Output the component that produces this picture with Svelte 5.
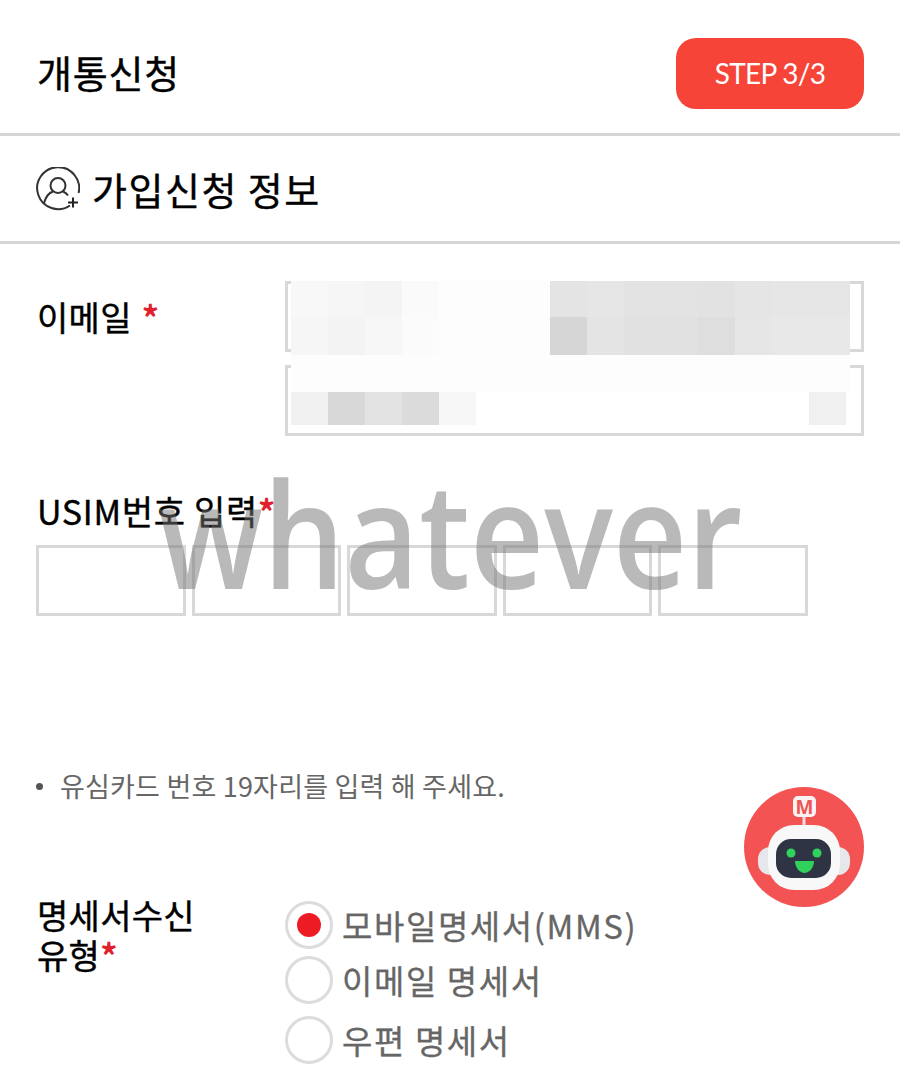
<script>
  const rows = [
    { h: 36, tiles: [['f8',1],['f6',1],['f4',1],['fa',1],['fd',3],['e4',1],['e6',1],['e3',2],['e2',1],['e5',1],['e6',2.11]] },
    { h: 38, tiles: [['f6',1],['f3',1],['f7',1],['fb',1],['fd',3],['d6',1],['e4',1],['e1',2],['de',1],['e6',1],['e8',2.11]] },
    { h: 37, tiles: [['fd',15.11]] },
    { h: 33, tiles: [['f0',1],['d8',1],['e3',1],['db',1],['f7',1],['ff',9],['f0',1]] }
  ];
  const otp = [0, 1, 2, 3, 4];
  const radios = [
    { label: '모바일명세서(MMS)', on: true },
    { label: '이메일 명세서', on: false },
    { label: '우편 명세서', on: false }
  ];
</script>

<div class="page">
  <header class="top">
    <h1>개통신청</h1>
    <span class="step">STEP 3/3</span>
  </header>

  <section class="sub">
    <svg class="uicon" viewBox="0 0 44 44" width="44" height="44" fill="none" stroke="#333" stroke-width="2">
      <path d="M34 38.500A21 21 0 1 1 42.600 26" />
      <circle cx="22" cy="18.500" r="7.500" />
      <path d="M8 36c2-7 6-10.500 9-11.500M27 24.500c2 .7 3.500 1.700 5 4" />
      <path d="M32 35.500h10M37 30.500v10" stroke="#222" />
    </svg>
    <h2>가입신청 정보</h2>
  </section>

  <div class="form">
    <div class="row email">
      <div class="label">이메일 <i class="sp">*</i></div>
      <div class="fields">
        <div class="box"></div>
        <div class="box"></div>
        <div class="mosaic" aria-hidden="true">
          {#each rows as r}
            <div class="mrow" style="height:{r.h}px">
              {#each r.tiles as [c, n]}
                <span style="width:{n * 37}px;background:#{c}{c}{c}"></span>
              {/each}
            </div>
          {/each}
        </div>
      </div>
    </div>

    <div class="usim">
      <div class="label">USIM번호 입력<i>*</i></div>
      <div class="otp">
        {#each otp as o}<div class="cell"></div>{/each}
      </div>
    </div>

    <p class="note"><span class="dot"></span>유심카드 번호 19자리를 입력 해 주세요.</p>

    <div class="row bill">
      <div class="label">명세서수신<br />유형<i>*</i></div>
      <div class="radios">
        {#each radios as r}
          <div class="radio">
            <span class="circle">{#if r.on}<span class="in"></span>{/if}</span>
            <span class="rtext">{r.label}</span>
          </div>
        {/each}
      </div>
    </div>
  </div>

  <svg class="bot" viewBox="0 0 120 120" width="120" height="120">
    <circle cx="60" cy="60" r="60" fill="#f35353" />
    <rect x="58.500" y="29" width="3" height="10" fill="#f4dcdc" />
    <rect x="49" y="9" width="23" height="21" rx="5" fill="#fbf3f3" />
    <text x="60.500" y="26.500" class="m">M</text>
    <rect x="14" y="60" width="24" height="28" rx="12" fill="#e6e7ea" />
    <rect x="82" y="60" width="24" height="28" rx="12" fill="#e6e7ea" />
    <rect x="24" y="38" width="72" height="65" rx="26" fill="#f8f8f8" />
    <rect x="32" y="52" width="55" height="39" rx="15" fill="#2f3445" />
    <circle cx="47" cy="66" r="4.500" fill="#31d25b" />
    <circle cx="73" cy="66" r="4.500" fill="#31d25b" />
    <path d="M51 74h19c0 7-5 12-9.500 12S51 81 51 74z" fill="#31d25b" />
  </svg>

  <div class="mark">whatever</div>
</div>

<style>
  :global(body) { margin: 0; background: #fff; }
  .page {
    position: relative;
    width: 900px;
    height: 1069px;
    overflow: hidden;
    background: #fff;
    font-family: "Noto Sans CJK KR", "Noto Sans", sans-serif;
    color: #000;
  }
  .top {
    height: 133px;
    border-bottom: 3px solid #d6d6d6;
    display: flex;
    align-items: center;
    justify-content: space-between;
    padding: 0 36px 0 37px;
  }
  h1 { margin: 10px 0 0; font-size: 38px; font-weight: 400; line-height: 1; letter-spacing: .8px; -webkit-text-stroke: .4px #000; }
  .step {
    width: 188px;
    height: 71px;
    margin-top: 14px;
    border-radius: 20px;
    background: #f64439;
    color: #fff;
    font: 400 28px/71px Lato, sans-serif;
    text-align: center;
    letter-spacing: -0.7px;
  }
  .sub {
    height: 105px;
    border-bottom: 3px solid #d6d6d6;
    display: flex;
    align-items: center;
    gap: 12px;
    padding: 0 36px;
  }
  .uicon { flex: none; }
  h2 { margin: 0; font-size: 38px; font-weight: 400; line-height: 1; letter-spacing: 1.500px; -webkit-text-stroke: .4px #000; }
  .form { padding: 37px 36px 0; }
  .row { display: flex; }
  .label { font-size: 34px; font-weight: 400; line-height: 42px; padding-left: 1px; letter-spacing: .3px; -webkit-text-stroke: .4px #000; }
  .label i { color: #e2202c; font-style: normal; font-weight: 700; -webkit-text-stroke: 0; }
  .label .sp { margin-left: 2px; }
  .email .label { width: 249px; padding-top: 15px; box-sizing: border-box; flex: none; }
  .fields { position: relative; display: flex; flex-direction: column; gap: 14px; width: 579px; }
  .box { height: 71px; border: 3px solid #d8d8d8; box-sizing: border-box; }
  .box + .box { margin-top: -1px; }
  .mosaic { position: absolute; left: 6px; top: 0; }
  .mrow { display: flex; }
  .mrow span { display: block; height: 100%; flex: none; }
  .usim { margin-top: 54px; }
  .usim .label { letter-spacing: .7px; }
  .otp { display: flex; gap: 6px; margin-top: 13px; }
  .cell { width: 149.500px; height: 71px; border: 3px solid #d8d8d8; box-sizing: border-box; }
  .note {
    margin: 154px 0 0;
    display: flex;
    align-items: center;
    font-size: 27px;
    line-height: 32px;
    color: #666;
    letter-spacing: 0.2px;
  }
  .dot { width: 7px; height: 7px; border-radius: 50%; background: #555; margin-right: 17px; flex: none; }
  .bill { margin-top: 90px; }
  .bill .label { width: 249px; flex: none; box-sizing: border-box; line-height: 40px; padding-top: 3px; }
  .radios { display: flex; flex-direction: column; gap: 6.500px; margin-top: 9px; }
  .radio { display: flex; align-items: center; gap: 9px; }
  .radio:nth-child(3) { margin-top: 6px; }
  .circle {
    width: 48px; height: 48px; border: 3px solid #dcdcdc; border-radius: 50%;
    box-sizing: border-box; display: flex; align-items: center; justify-content: center; flex: none;
  }
  .in { width: 24px; height: 24px; border-radius: 50%; background: #ed1c24; }
  .rtext { font-size: 33px; color: #666; letter-spacing: 1.600px; font-weight: 400; line-height: 48px; -webkit-text-stroke: .3px #666; }
  .bot { position: absolute; left: 744px; top: 787px; }
  .m { font: 700 19px "Noto Sans", sans-serif; fill: #ee5555; text-anchor: middle; }
  .mark {
    position: absolute;
    left: 158px;
    top: 430px;
    font: 600 147px/1.4 "Open Sans", sans-serif;
    color: rgba(115, 115, 115, 0.5);
    white-space: nowrap;
    pointer-events: none;
    transform: scaleX(.875);
    transform-origin: left top;
  }
</style>
